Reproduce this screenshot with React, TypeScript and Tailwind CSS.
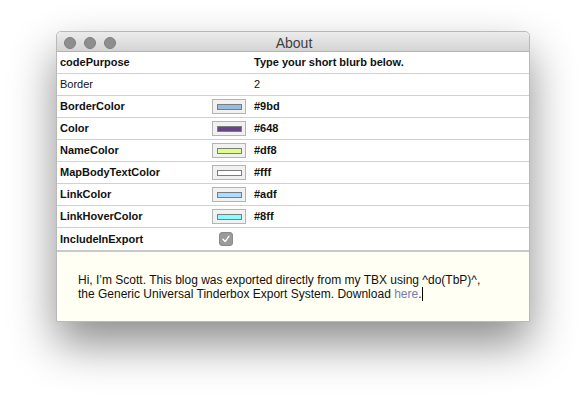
import React from 'react';

type Row = {
  label: string;
  value?: string;
  swatch?: string;
  bold?: boolean;
  check?: boolean;
};

const rows: Row[] = [
  { label: 'codePurpose', value: 'Type your short blurb below.', bold: true },
  { label: 'Border', value: '2', bold: false },
  { label: 'BorderColor', value: '#9bd', swatch: '#99bbdd', bold: true },
  { label: 'Color', value: '#648', swatch: '#664488', bold: true },
  { label: 'NameColor', value: '#df8', swatch: '#ddff88', bold: true },
  { label: 'MapBodyTextColor', value: '#fff', swatch: '#ffffff', bold: true },
  { label: 'LinkColor', value: '#adf', swatch: '#aaddff', bold: true },
  { label: 'LinkHoverColor', value: '#8ff', swatch: '#88ffff', bold: true },
  { label: 'IncludeInExport', bold: true, check: true },
];

function Swatch({ color }: { color: string }) {
  return (
    <div className="w-[34px] h-[15px] border border-[#b4b4b4] bg-[#f1f1f1] flex items-center justify-center">
      <div className="w-[25px] h-[6px] border border-[#7d7d7d]" style={{ backgroundColor: color }} />
    </div>
  );
}

function Checkbox() {
  return (
    <div className="ml-[7px] w-[14px] h-[14px] rounded-[3px] bg-[#9b9b9b] border border-[#8a8a8a] flex items-center justify-center">
      <svg width="10" height="10" viewBox="0 0 10 10">
        <path d="M2 5.3 L4.2 7.6 L8 2.2" fill="none" stroke="#ffffff" strokeWidth="1.4" strokeLinecap="round" strokeLinejoin="round" />
      </svg>
    </div>
  );
}

export default function App() {
  return (
    <div className="w-[586px] h-[403px] bg-white pt-[31px] pl-[56px] overflow-hidden" style={{ fontFamily: '"Liberation Sans", Arial, sans-serif' }}>
      <div className="w-[474px] h-[291px] flex flex-col bg-white rounded-t-[5px] border border-[#b9b9b9] shadow-[0_22px_45px_rgba(0,0,0,0.45)]">
        {/* title bar */}
        <div className="h-[20px] flex items-center pt-[2px] px-[7px] rounded-t-[5px] bg-gradient-to-b from-[#ececec] to-[#d4d4d4] border-b border-[#b3b3b3]">
          <div className="flex gap-[8px]">
            <span className="w-[12px] h-[12px] rounded-full bg-[#8e8e8e] border border-[#7f7f7f]" />
            <span className="w-[12px] h-[12px] rounded-full bg-[#8e8e8e] border border-[#7f7f7f]" />
            <span className="w-[12px] h-[12px] rounded-full bg-[#8e8e8e] border border-[#7f7f7f]" />
          </div>
          <div className="flex-1 text-center text-[14px] leading-[16px] text-[#3f3f3f] pr-[50px]">About</div>
        </div>

        {/* attribute table */}
        <div className="flex flex-col">
          {rows.map((r, i) => (
            <div
              key={r.label}
              className={`h-[22px] flex items-center text-[11px] text-[#111] ${i < rows.length - 1 ? 'border-b border-[#d0d0d0]' : ''}`}
            >
              <div className={`w-[155px] pl-[3px] ${r.bold ? 'font-bold' : ''}`}>{r.label}</div>
              <div className="w-[42px] flex items-center">
                {r.swatch && <Swatch color={r.swatch} />}
                {r.check && <Checkbox />}
              </div>
              <div className={r.bold ? 'font-bold' : ''}>{r.value}</div>
            </div>
          ))}
        </div>

        {/* text area */}
        <div className="flex-1 border-t-2 border-[#c9c9c9] bg-[#fffff4] pl-[21px] pt-[21px] text-[12px] leading-[14px] text-[#111]">
          <p>
            Hi, I’m Scott. This blog was exported directly from my TBX using ^do(TbP)^,
            <br />
            the Generic Universal Tinderbox Export System. Download <span className="text-[#7a78b8]">here</span>.
            <span className="inline-block w-px h-[14px] bg-black align-[-3px]" />
          </p>
        </div>
      </div>
    </div>
  );
}
